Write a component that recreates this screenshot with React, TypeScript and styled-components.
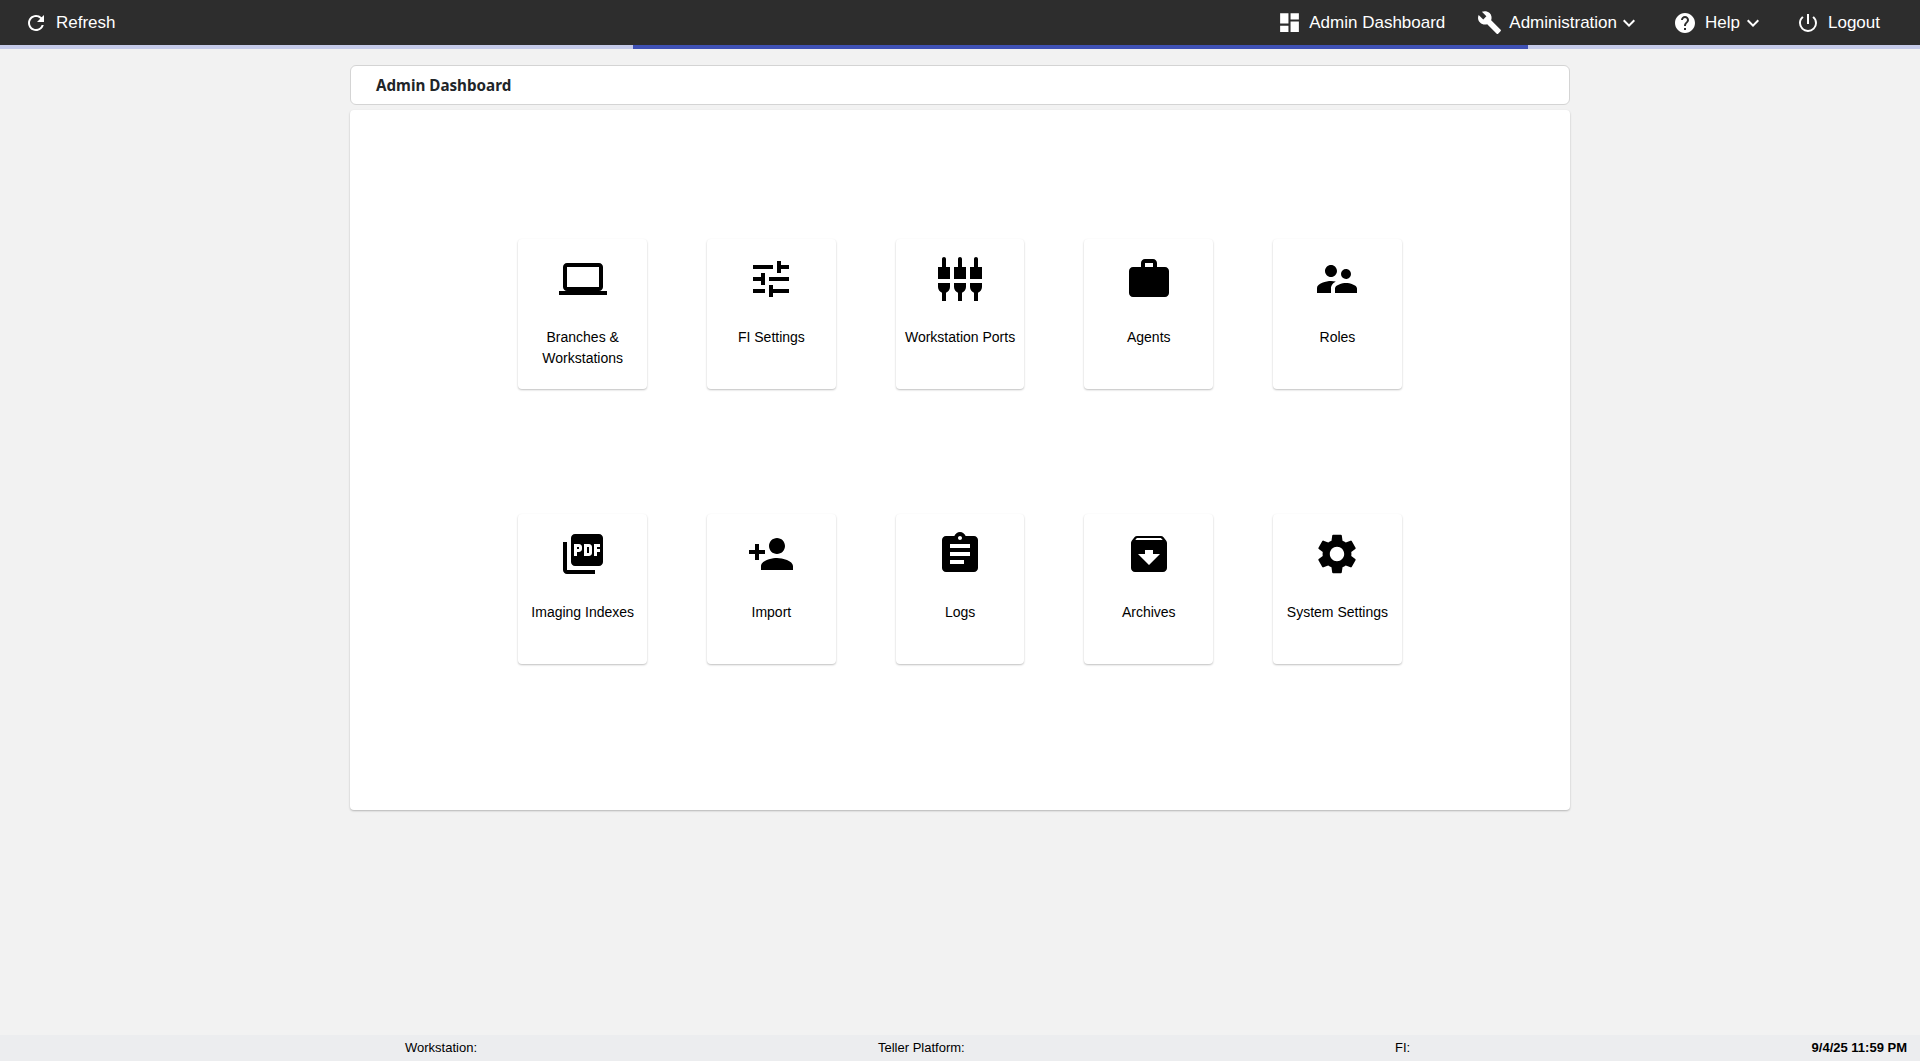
import React from 'react';
import styled, { createGlobalStyle } from 'styled-components';
import {
  MdRefresh, MdDashboard, MdBuild, MdHelp, MdPowerSettingsNew, MdKeyboardArrowDown,
  MdLaptop, MdTune, MdSettingsInputComposite, MdWork, MdSupervisorAccount,
  MdPictureAsPdf, MdPersonAdd, MdAssignment, MdArchive, MdSettings,
} from 'react-icons/md';

const Global = createGlobalStyle`
  html, body { margin: 0; padding: 0; height: 100%; background: #f2f2f2; }
  #root { height: 100%; }
  * { box-sizing: border-box; }
`;

const Page = styled.div`
  height: 1061px;
  display: flex;
  flex-direction: column;
  background: #f2f2f2;
  overflow: hidden;
`;

const Toolbar = styled.header`
  height: 45px;
  flex: none;
  background: #2d2d2d;
  display: flex;
  align-items: center;
  padding-left: 24px;
  padding-right: 40px;
  color: #fff;
  font: 17px "Liberation Sans", Arial, sans-serif;
`;

const NavGroup = styled.nav`
  margin-left: auto;
  display: flex;
  align-items: center;
`;

const NavItem = styled.div<{ $gap?: number; $ml?: number }>`
  display: flex;
  align-items: center;
  gap: ${p => p.$gap ?? 8}px;
  margin-left: ${p => p.$ml ?? 0}px;
  white-space: nowrap;
`;

const Chevron = styled(MdKeyboardArrowDown)`
  margin-left: -7px;
`;

const Progress = styled.div`
  height: 4px;
  flex: none;
  background: #c5cae9;
  display: flex;
  justify-content: flex-start;
  padding-left: 633px;
`;

const ProgressBar = styled.div`
  width: 895px;
  height: 100%;
  background: #3f51b5;
`;

const Content = styled.main`
  width: 1220px;
  margin: 16px auto 0;
  flex: 1;
  display: flex;
  flex-direction: column;
  gap: 5px;
`;

const TitleCard = styled.div`
  height: 40px;
  background: #fff;
  border: 1px solid #d4d4d4;
  border-radius: 6px;
  padding-left: 25px;
  display: flex;
  align-items: center;
  font: 700 15.2px "Noto Sans", sans-serif;
  color: #212529;
`;

const Panel = styled.section`
  height: 700px;
  background: #fff;
  border-radius: 4px;
  box-shadow: 0 1px 2px rgba(0, 0, 0, 0.25);
  padding: 129px 168px 0 168.3px;
  display: grid;
  grid-template-columns: repeat(5, 128.8px);
  grid-auto-rows: 150px;
  column-gap: 59.9px;
  row-gap: 125px;
`;

const Tile = styled.div`
  background: #fff;
  border-radius: 4px;
  box-shadow: 0 1px 2px rgba(0, 0, 0, 0.25);
  padding: 16px 6px 0;
  display: flex;
  flex-direction: column;
  align-items: center;
  text-align: center;
  color: #000;
`;

const TileLabel = styled.div`
  margin-top: 24px;
  font: 14px/21px "Liberation Sans", Arial, sans-serif;
  color: #000;
`;

const Footer = styled.footer`
  height: 26px;
  flex: none;
  background: #ecedef;
  padding: 0 13px 1px 405px;
  display: grid;
  grid-template-columns: 473px 517px 1fr auto;
  align-items: center;
  font: 13px "Liberation Sans", Arial, sans-serif;
  color: #000;
`;

const Clock = styled.span`
  font-weight: 700;
`;

const tiles: { label: React.ReactNode; Icon: React.ComponentType<{ size?: number }> }[] = [
  { label: <>Branches &amp; Workstations</>, Icon: MdLaptop },
  { label: 'FI Settings', Icon: MdTune },
  { label: 'Workstation Ports', Icon: MdSettingsInputComposite },
  { label: 'Agents', Icon: MdWork },
  { label: 'Roles', Icon: MdSupervisorAccount },
  { label: 'Imaging Indexes', Icon: MdPictureAsPdf },
  { label: 'Import', Icon: MdPersonAdd },
  { label: 'Logs', Icon: MdAssignment },
  { label: 'Archives', Icon: MdArchive },
  { label: 'System Settings', Icon: MdSettings },
];

export default function App() {
  return (
    <Page>
      <Global />
      <Toolbar>
        <NavItem>
          <MdRefresh size={24} />
          Refresh
        </NavItem>
        <NavGroup>
          <NavItem $gap={7}><MdDashboard size={25} />Admin Dashboard</NavItem>
          <NavItem $ml={32} $gap={7}><MdBuild size={25} />Administration<Chevron size={24} /></NavItem>
          <NavItem $ml={32}><MdHelp size={24} />Help<Chevron size={24} /></NavItem>
          <NavItem $ml={31}><MdPowerSettingsNew size={24} />Logout</NavItem>
        </NavGroup>
      </Toolbar>
      <Progress><ProgressBar /></Progress>
      <Content>
        <TitleCard>Admin Dashboard</TitleCard>
        <Panel>
          {tiles.map(({ label, Icon }, i) => (
            <Tile key={i}>
              <Icon size={48} />
              <TileLabel>{label}</TileLabel>
            </Tile>
          ))}
        </Panel>
      </Content>
      <Footer>
        <span>Workstation:</span>
        <span>Teller Platform:</span>
        <span>FI:</span>
        <Clock>9/4/25 11:59 PM</Clock>
      </Footer>
    </Page>
  );
}
